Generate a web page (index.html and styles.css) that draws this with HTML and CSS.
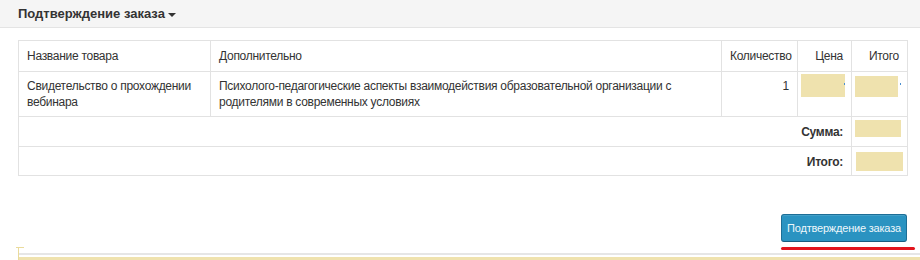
FILE: index.html
```html
<!DOCTYPE html>
<html lang="ru">
<head>
<meta charset="utf-8">
<title>Подтверждение заказа</title>
<link rel="stylesheet" href="styles.css">
</head>
<body>
<div class="panel-heading">
  <span class="panel-title">Подтверждение заказа</span><span class="caret"></span>
</div>
<div class="panel-body">
  <table class="order">
    <colgroup>
      <col class="c-name"><col class="c-extra"><col class="c-qty"><col class="c-price"><col class="c-total">
    </colgroup>
    <tr class="row-head">
      <td>Название товара</td>
      <td>Дополнительно</td>
      <td class="right">Количество</td>
      <td class="right">Цена</td>
      <td class="right">Итого</td>
    </tr>
    <tr class="row-item">
      <td>Свидетельство о прохождении вебинара</td>
      <td>Психолого-педагогические аспекты взаимодействия образовательной организации с родителями в современных условиях</td>
      <td class="right">1</td>
      <td class="masked"><span class="mask mask-price"></span><span class="dot"></span></td>
      <td class="masked"><span class="mask mask-item"></span><span class="dot"></span></td>
    </tr>
    <tr class="row-sum">
      <td colspan="4" class="right bold">Сумма:</td>
      <td class="masked"><span class="mask mask-sum"></span></td>
    </tr>
    <tr class="row-total">
      <td colspan="4" class="right bold">Итого:</td>
      <td class="masked"><span class="mask mask-grand"></span></td>
    </tr>
  </table>
</div>
<div class="footer">
  <div class="actions">
    <button class="btn-confirm" type="button">Подтверждение заказа</button>
  </div>
  <div class="rule-row">
    <div class="mark-row">
      <span class="tick"></span>
      <span class="red-line"></span>
    </div>
    <div class="gray-line"></div>
    <div class="yellow-line"></div>
  </div>
</div>
</body>
</html>
```
FILE: styles.css
```css
html, body {
  margin: 0;
  padding: 0;
  background: #ffffff;
}
body {
  font-family: "Liberation Sans", Arial, sans-serif;
  font-size: 12px;
  color: #333333;
  width: 920px;
  height: 260px;
  overflow: hidden;
}
.panel-heading {
  height: 27px;
  background: #f5f5f5;
  border-bottom: 1px solid #e4e4e4;
  padding-left: 18px;
  display: flex;
  align-items: center;
}
.panel-title {
  font-size: 13px;
  font-weight: bold;
  color: #333333;
  line-height: 16px;
  padding-top: 1px;
}
.caret {
  display: inline-block;
  width: 0;
  height: 0;
  margin-left: 3px;
  margin-top: 2px;
  border-left: 4px solid transparent;
  border-right: 4px solid transparent;
  border-top: 4px solid #333333;
}
.panel-body {
  padding: 12px 13px 0 18px;
}
.order {
  width: 889px;
  border-collapse: collapse;
  table-layout: fixed;
  border: 1px solid #dddddd;
}
.c-name { width: 192px; }
.c-extra { width: 511px; }
.c-qty { width: 76px; }
.c-price { width: 54px; }
.c-total { width: 56px; }
.order td {
  border: 1px solid #e2e2e2;
  padding: 7px 8px 0 8px;
  line-height: 16px;
  vertical-align: top;
  letter-spacing: -0.28px;
}
.row-head td { height: 23px; }
.row-item td { height: 38px; padding-top: 6px; }
.row-sum td { height: 22px; }
.row-total td { height: 21px; }
.right { text-align: right; }
.bold { font-weight: bold; }
.order td.masked {
  padding: 2px 0 0 3px;
  position: relative;
}
.mask {
  display: block;
  background: #efe2ae;
}
.mask-price { width: 44px; height: 23px; }
.mask-item { width: 43px; height: 21px; margin-top: 2px; }
.mask-sum { width: 46px; height: 17px; margin-top: 1px; }
.mask-grand { width: 47px; height: 19px; margin-top: 3px; margin-left: 1px; }
.dot {
  position: absolute;
  top: 11px;
  right: 6px;
  width: 1px;
  height: 2px;
  background: #4a8fd0;
}
.footer {
  display: flex;
  flex-direction: column;
  margin-top: 38px;
}
.actions {
  display: flex;
  justify-content: flex-end;
  padding-right: 13px;
}
.btn-confirm {
  width: 126px;
  height: 28px;
  margin: 0;
  padding: 0;
  font-family: "Liberation Sans", Arial, sans-serif;
  font-size: 11px;
  letter-spacing: -0.2px;
  color: #eef7fb;
  background: #2a93c1;
  border: 1px solid #1d6e96;
  border-bottom-color: #185d80;
  border-radius: 3px;
  box-shadow: inset 0 1px 0 rgba(255, 255, 255, 0.12);
}
.rule-row {
  margin-top: 5px;
  margin-left: 18px;
  height: 13px;
  border-left: 1px solid #eadb9c;
  display: flex;
  flex-direction: column;
}
.mark-row {
  height: 4px;
  display: flex;
  justify-content: space-between;
  align-items: flex-start;
}
.tick {
  display: block;
  width: 8px;
  height: 1px;
  margin-left: -3px;
  background: #eadb9c;
}
.red-line {
  display: block;
  width: 134px;
  height: 3px;
  margin-right: 5px;
  background: #e2141d;
  border-radius: 2px;
}
.gray-line {
  margin-top: 2px;
  height: 2px;
  background: #e6e6e6;
}
.yellow-line {
  margin-top: 2px;
  height: 3px;
  background: #efe2ae;
}
```
